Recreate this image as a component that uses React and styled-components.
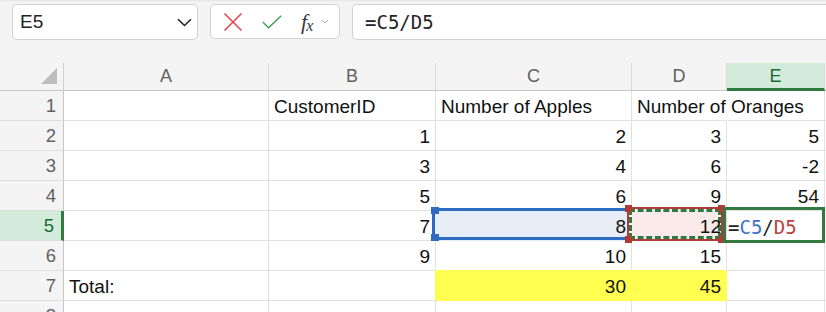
import React from 'react'
import styled, { createGlobalStyle } from 'styled-components'

const GlobalStyle = createGlobalStyle`
html, body {
  margin: 0;
  padding: 0;
  background: #ffffff;
  overflow: hidden;
}
body {
  font-family: "Liberation Sans", Arial, sans-serif;
  color: #1f1f1f;
}
`;

const COLS = ['A', 'B', 'C', 'D', 'E']

const ROWS = [
  ['', 'CustomerID', 'Number of Apples', 'Number of Oranges', ''],
  ['', 1, 2, 3, 5],
  ['', 3, 4, 6, -2],
  ['', 5, 6, 9, 54],
  ['', 7, 8, 12, '__formula'],
  ['', 9, 10, 15, ''],
  ['Total:', '', 30, 45, ''],
  ['', '', '', '', ''],
]

const YELLOW = '#ffff50'

const App = () => {
  return (
    <Page>
      <GlobalStyle />
      <Toolbar>
        <NameBox>
          <span>E5</span>
          <svg width="15" height="9" viewBox="0 0 15 9">
            <path d="M1 1.2 L7.5 7.5 L14 1.2" fill="none" stroke="#242424" strokeWidth="1.6" />
          </svg>
        </NameBox>
        <FxBox>
          <IconSlot>
            <svg width="20" height="20" viewBox="0 0 20 20">
              <path d="M1.5 1.5 L18.5 18.5 M18.5 1.5 L1.5 18.5" stroke="#e0474b" strokeWidth="1.6" fill="none" />
            </svg>
          </IconSlot>
          <IconSlot>
            <svg width="26" height="18" viewBox="0 0 26 18">
              <path d="M1 9 L8.5 16.5 L25 1" stroke="#3e9d4e" strokeWidth="1.7" fill="none" />
            </svg>
          </IconSlot>
          <FxLabel>
            <FxF>f</FxF>
            <FxX>x</FxX>
          </FxLabel>
          <svg width="8" height="5" viewBox="0 0 8 5">
            <path d="M1 1 L4 4 L7 1" stroke="#a8a8a8" strokeWidth="1" fill="none" />
          </svg>
        </FxBox>
        <FormulaInput>=C5/D5</FormulaInput>
      </Toolbar>

      <Sheet>
        <Corner>
          <svg width="18" height="18" viewBox="0 0 18 18">
            <path d="M17 1 L17 17 L1 17 Z" fill="#bdbdbd" />
          </svg>
        </Corner>
        {COLS.map((c) => (
          <ColHeader key={c} $active={c === 'E'}>{c}</ColHeader>
        ))}
        <ColHeader $last />

        {ROWS.map((row, r) => (
          <React.Fragment key={r}>
            <RowHeader $active={r === 4}>{r + 1}</RowHeader>
            {row.map((value, c) => {
              const isText = typeof value === 'string'
              const filled = r === 6 && (c === 2 || c === 3)
              const overflow = r === 0 && c === 3
              if (value === '__formula') {
                return (
                  <Cell key={c}>
                    <ActiveFrame />
                    <EditText>
                      =<Ref $color="#3b73c8">C5</Ref>/<Ref $color="#b8433c">D5</Ref>
                    </EditText>
                  </Cell>
                )
              }
              return (
                <Cell
                  key={c}
                  $right={!isText}
                  $fill={filled ? YELLOW : r === 4 && c === 2 ? '#e8eef7' : undefined}
                  $noRight={overflow}
                >
                  {r === 4 && c === 2 && (
                    <BlueFrame>
                      <Handle $color="#2f6bc1" $top />
                      <Handle $color="#2f6bc1" />
                    </BlueFrame>
                  )}
                  {r === 4 && c === 3 && (
                    <RedFrame>
                      <MarchingAnts />
                      <Handle $color="#b03a36" $top $small />
                      <Handle $color="#b03a36" $small />
                      <Handle $color="#b03a36" $top $small $right />
                      <Handle $color="#b03a36" $small $right />
                    </RedFrame>
                  )}
                  <Value>{value}</Value>
                </Cell>
              )
            })}
            <Cell $last />
          </React.Fragment>
        ))}
      </Sheet>
    </Page>
  )
}

export default App

const Page = styled.div`
width: 826px;
height: 312px;
overflow: hidden;
`;

const Toolbar = styled.div`
display: flex;
align-items: flex-start;
height: 63px;
box-sizing: border-box;
padding: 4px 0 0 12px;
background: #f4f4f4;
box-shadow: inset 0 2px 2px -1px #e4e4e4;
`;

const Box = styled.div`
box-sizing: border-box;
background: #ffffff;
border: 1px solid #d1d1d1;
border-radius: 5px;
display: flex;
align-items: center;
`;

const NameBox = styled(Box)`
width: 186px;
height: 36px;
padding: 0 5px 0 7px;
justify-content: space-between;
font-size: 19px;
color: #242424;
`;

const FxBox = styled(Box)`
width: 130px;
height: 35px;
margin-left: 12px;
padding: 0 0 0 12px;
gap: 0;
`;

const IconSlot = styled.div`
display: flex;
align-items: center;
justify-content: center;
width: 20px;
margin-right: 19px;
`;

const FxLabel = styled.div`
display: flex;
align-items: baseline;
margin: 0 8px 0 0;
font-family: "Liberation Serif", "Times New Roman", serif;
font-style: italic;
color: #3a3a3a;
`;

const FxF = styled.span`
font-size: 22px;
`;

const FxX = styled.span`
font-size: 16px;
position: relative;
top: 2px;
margin-left: -1px;
`;

const FormulaInput = styled(Box)`
flex: 1;
height: 36px;
margin-left: 12px;
border-right: none;
border-radius: 5px 0 0 5px;
padding-left: 12px;
font-family: "DejaVu Sans Mono", "Liberation Mono", monospace;
font-size: 19px;
color: #242424;
`;

const Sheet = styled.div`
display: grid;
grid-template-columns: 64px 205px 167px 196px 95px 98px 1fr;
grid-auto-rows: 30px;
grid-template-rows: 28px;
`;

const Corner = styled.div`
box-sizing: border-box;
background: #f4f4f4;
border-right: 1px solid #d0d0d0;
border-bottom: 1px solid #c6c6c6;
display: flex;
align-items: flex-end;
justify-content: flex-end;
padding: 0 5px 5px 0;
`;

const ColHeader = styled.div`
box-sizing: border-box;
display: flex;
align-items: center;
justify-content: center;
font-size: 18px;
color: ${(p) => (p.$active ? '#1e6b35' : '#616161')};
background: ${(p) => (p.$active ? '#d2ebdb' : '#f4f4f4')};
border-right: 1px solid ${(p) => (p.$last ? 'transparent' : '#dadada')};
border-bottom: ${(p) => (p.$active ? '3px solid #2f7a3e' : '1px solid #c6c6c6')};
padding-top: ${(p) => (p.$active ? '2px' : '0')};
`;

const RowHeader = styled.div`
box-sizing: border-box;
display: flex;
align-items: center;
justify-content: flex-end;
padding-right: 7px;
font-size: 18.5px;
color: ${(p) => (p.$active ? '#1e6b35' : '#616161')};
background: ${(p) => (p.$active ? '#d2ebdb' : '#f4f4f4')};
border-bottom: 1px solid #dedede;
border-right: ${(p) => (p.$active ? '3px solid #2f7a3e' : '1px solid #c6c6c6')};
`;

const Cell = styled.div`
position: relative;
box-sizing: border-box;
display: flex;
align-items: center;
justify-content: ${(p) => (p.$right ? 'flex-end' : 'flex-start')};
padding: 3px 5px 0 5px;
font-size: 19px;
color: #111111;
white-space: nowrap;
background: ${(p) => p.$fill || 'transparent'};
border-right: 1px solid ${(p) => (p.$noRight || p.$last ? 'transparent' : p.$fill || '#e1e1e1')};
border-bottom: 1px solid ${(p) => p.$fill || '#e1e1e1'};
box-shadow: ${(p) => (p.$fill ? `-1px -1px 0 0 ${p.$fill}` : 'none')};
`;

const Value = styled.span`
position: relative;
z-index: 3;
`;

const BlueFrame = styled.div`
position: absolute;
top: -3px;
left: -4px;
right: 0;
bottom: 0;
border: 3px solid #2f6bc1;
z-index: 1;
`;

const RedFrame = styled.div`
position: absolute;
top: -4px;
left: -5px;
right: 3px;
bottom: -1px;
border: 2px solid #b03a36;
z-index: 2;
`;

const MarchingAnts = styled.div`
position: absolute;
inset: 0;
border: 3px dashed #2e7a42;
background: #ffffff;
box-shadow: inset 0 0 0 60px #f9e9e8;
`;

const Handle = styled.div`
position: absolute;
width: ${(p) => (p.$small ? '7px' : '8px')};
height: 7px;
background: ${(p) => p.$color};
${(p) => (p.$right ? 'right: -4px;' : 'left: -4px;')}
${(p) => (p.$top ? 'top: -4px;' : 'bottom: -4px;')}
z-index: 4;
`;

const ActiveFrame = styled.div`
position: absolute;
top: -4px;
left: -4px;
right: -1px;
bottom: -3px;
border: 3.5px solid #327a40;
z-index: 5;
`;

const EditText = styled.span`
position: relative;
z-index: 6;
margin-left: -4px;
font-family: "DejaVu Sans Mono", "Liberation Mono", monospace;
font-size: 19px;
color: #1f1f1f;
`;

const Ref = styled.span`
color: ${(p) => p.$color};
`;
